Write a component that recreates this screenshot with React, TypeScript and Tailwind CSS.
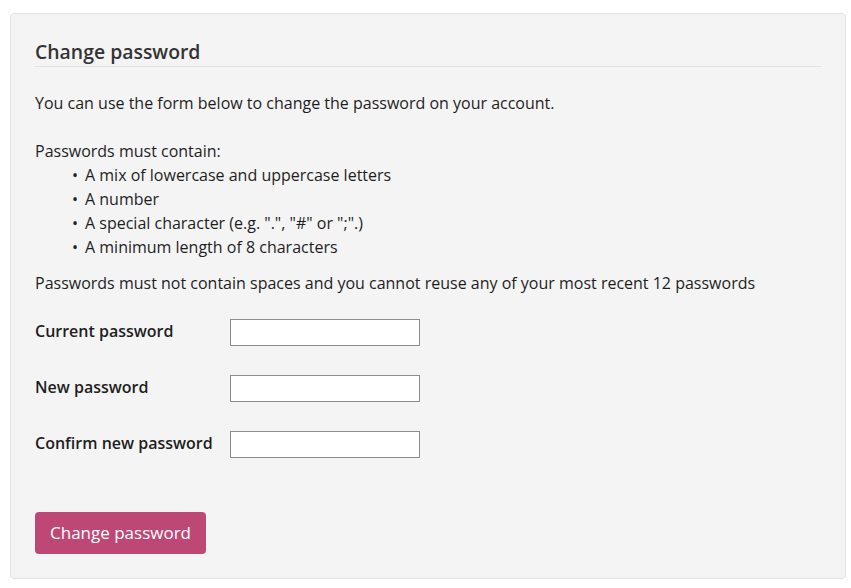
import React from 'react'

const rules = [
  'A mix of lowercase and uppercase letters',
  'A number',
  'A special character (e.g. ".", "#" or ";".)',
  'A minimum length of 8 characters',
]

const fields = ['Current password', 'New password', 'Confirm new password']

export default function App() {
  return (
    <div className="min-h-screen bg-white pt-[13px] pr-[5px] pl-[10px] font-['Open_Sans',sans-serif] text-[#1e1e1e]">
      <div className="rounded-[4px] border border-[#e2e2e2] bg-[#f4f4f4] px-[24px] pt-[24px] pb-[24px]">
        <h2 className="border-b border-[#e2e2e2] pb-0 text-[19.4px] font-semibold leading-7 text-[#333]">
          Change password
        </h2>

        <p className="mt-6 text-[16px] leading-6">
          You can use the form below to change the password on your account.
        </p>

        <p className="mt-6 text-[16px] leading-6">Passwords must contain:</p>
        <ul className="pl-[37px] text-[16px] leading-6">
          {rules.map((r) => (
            <li key={r} className="flex">
              <span className="w-[13px]">•</span>
              <span>{r}</span>
            </li>
          ))}
        </ul>

        <p className="mt-3 text-[16px] leading-6">
          Passwords must not contain spaces and you cannot reuse any of your most recent 12 passwords
        </p>

        <div className="mt-6 flex flex-col gap-[29px]">
          {fields.map((f) => (
            <div key={f} className="flex items-center">
              <label className="w-[195px] -translate-y-[2px] text-[16px] font-semibold leading-6">{f}</label>
              <input
                type="password"
                className="h-[27px] w-[190px] border border-[#8c8c8c] bg-white"
              />
            </div>
          ))}
        </div>

        <button className="mt-[54px] h-[42px] w-[171px] rounded-[4px] bg-[#bd4875] text-[17px] text-white">
          Change password
        </button>
      </div>
    </div>
  )
}
